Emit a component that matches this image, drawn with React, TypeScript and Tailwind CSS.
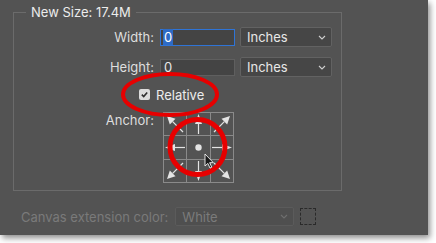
import React from 'react';

const Chevron = () => (
  <svg width="8" height="5" viewBox="0 0 8 5" className="shrink-0">
    <polyline points="1,1 4,4 7,1" fill="none" stroke="currentColor" strokeWidth="1.1" />
  </svg>
);

const Select: React.FC<{ value: string; className?: string; disabled?: boolean }> = ({ value, className, disabled }) => (
  <div
    className={`flex items-center justify-between rounded-[2px] border pl-[6px] pr-[5px] ${
      disabled ? 'border-[#5b5b5b] bg-[#4f4f4f] text-[#7b7b7b]' : 'border-[#626262] bg-[#464646] text-[#e8e8e8]'
    } ${className ?? ''}`}
  >
    <span>{value}</span>
    <span className={disabled ? 'text-[#6f6f6f]' : 'text-[#cfcfcf]'}>
      <Chevron />
    </span>
  </div>
);

// one arrow of the anchor grid, tail -> tip
const Arrow = ({ x1, y1, x2, y2, head = 8, half = 4 }: { x1: number; y1: number; x2: number; y2: number; head?: number; half?: number }) => {
  const dx = x2 - x1;
  const dy = y2 - y1;
  const len = Math.hypot(dx, dy);
  const ux = dx / len;
  const uy = dy / len;
  const bx = x2 - ux * head;
  const by = y2 - uy * head;
  const px = -uy * half;
  const py = ux * half;
  return (
    <g>
      <line x1={x1} y1={y1} x2={bx} y2={by} stroke="#e4e4e4" strokeWidth="1.2" />
      <polygon points={`${x2},${y2} ${bx + px},${by + py} ${bx - px},${by - py}`} fill="#e4e4e4" />
    </g>
  );
};

const AnchorGrid = () => (
  <svg width="71" height="71" viewBox="0 0 71 71" className="shrink-0">
    <rect x="0.5" y="0.5" width="70" height="70" fill="none" stroke="#8a8a8a" />
    <line x1="23.5" y1="0" x2="23.5" y2="71" stroke="#8a8a8a" />
    <line x1="47.5" y1="0" x2="47.5" y2="71" stroke="#8a8a8a" />
    <line x1="0" y1="23.5" x2="71" y2="23.5" stroke="#8a8a8a" />
    <line x1="0" y1="47.5" x2="71" y2="47.5" stroke="#8a8a8a" />
    <circle cx="35.5" cy="35.5" r="3.2" fill="#e4e4e4" />
    <Arrow x1={35.5} y1={22} x2={35.5} y2={2} head={10} half={3.5} />
    <Arrow x1={35.5} y1={49} x2={35.5} y2={69} head={10} half={3.5} />
    <Arrow x1={22} y1={35.5} x2={2} y2={35.5} head={10} half={3.5} />
    <Arrow x1={49} y1={35.5} x2={69} y2={35.5} head={10} half={3.5} />
    <Arrow x1={20} y1={20} x2={4} y2={4} />
    <Arrow x1={51} y1={20} x2={67} y2={4} />
    <Arrow x1={20} y1={51} x2={4} y2={67} />
    <Arrow x1={51} y1={51} x2={67} y2={67} />
  </svg>
);

export default function App() {
  return (
    <div
      className="relative h-[243px] w-[436px] overflow-hidden bg-white text-[13px] leading-[16px]"
      style={{ fontFamily: 'Inter, "Noto Sans", sans-serif' }}
    >
      <div className="flex h-[235px] w-[428px] flex-col bg-[#535353] shadow-[2px_3px_6px_rgba(0,0,0,0.45)]">
        <fieldset className="ml-[13px] mt-[4px] h-[187px] w-[329px] border border-[#6b6b6b]">
          <legend className="ml-[12px] px-[5px] text-[#ececec]">New Size: 17.4M</legend>

          <div className="mt-[7px] flex items-center">
            <span className="w-[140px] text-right text-[#dedede]">Width:</span>
            <div className="ml-[6px] flex h-[17px] w-[75px] items-center border border-[#2f74d6] bg-[#444444] pl-[2px]">
              <span className="bg-[#2d6bc6] px-[1px] text-white">0</span>
            </div>
            <Select value="Inches" className="ml-[5px] h-[20px] w-[92px]" />
          </div>

          <div className="mt-[10px] flex items-center">
            <span className="w-[140px] text-right text-[#dedede]">Height:</span>
            <div className="ml-[6px] flex h-[17px] w-[75px] items-center border border-[#5f5f5f] bg-[#444444] pl-[3px] text-[#e8e8e8]">
              0
            </div>
            <Select value="Inches" className="ml-[5px] h-[20px] w-[92px]" />
          </div>

          <div className="mt-[10px] flex h-[15px] items-center pl-[125px]">
            <span className="flex h-[11px] w-[11px] items-center justify-center rounded-[2px] bg-[#dcdcdc]">
              <svg width="9" height="9" viewBox="0 0 9 9">
                <polyline points="1.8,4.6 3.7,6.5 7.2,2.4" fill="none" stroke="#2f2f2f" strokeWidth="1.6" />
              </svg>
            </span>
            <span className="ml-[6px] text-[#ececec]">Relative</span>
          </div>

          <div className="mt-[10px] flex items-start">
            <span className="w-[140px] text-right text-[#dedede]">Anchor:</span>
            <div className="ml-[9px]">
              <AnchorGrid />
            </div>
          </div>
        </fieldset>

        <div className="mt-[16px] flex items-center pl-[21px]">
          <span className="text-[#7a7a7a]">Canvas extension color:</span>
          <Select value="White" disabled className="ml-[7px] h-[19px] w-[119px]" />
          <div className="ml-[6px] h-[17px] w-[16px] border border-dashed border-[#2a2a2a]" />
        </div>
      </div>

      {/* red annotation marks + pointer */}
      <svg className="pointer-events-none absolute left-0 top-0" width="436" height="243" viewBox="0 0 436 243">
        <ellipse cx="170" cy="94.5" rx="47" ry="20.5" fill="none" stroke="#e60000" strokeWidth="4" />
        <circle cx="197.5" cy="147" r="27.5" fill="none" stroke="#e60000" strokeWidth="5" />
        <path
          d="M205 154 L205 166 L207.8 163.4 L210 168 L211.8 167.2 L209.6 162.7 L213.3 162.6 Z"
          fill="#1a1a1a"
          stroke="#f2f2f2"
          strokeWidth="0.9"
          strokeLinejoin="round"
        />
      </svg>
    </div>
  );
}
